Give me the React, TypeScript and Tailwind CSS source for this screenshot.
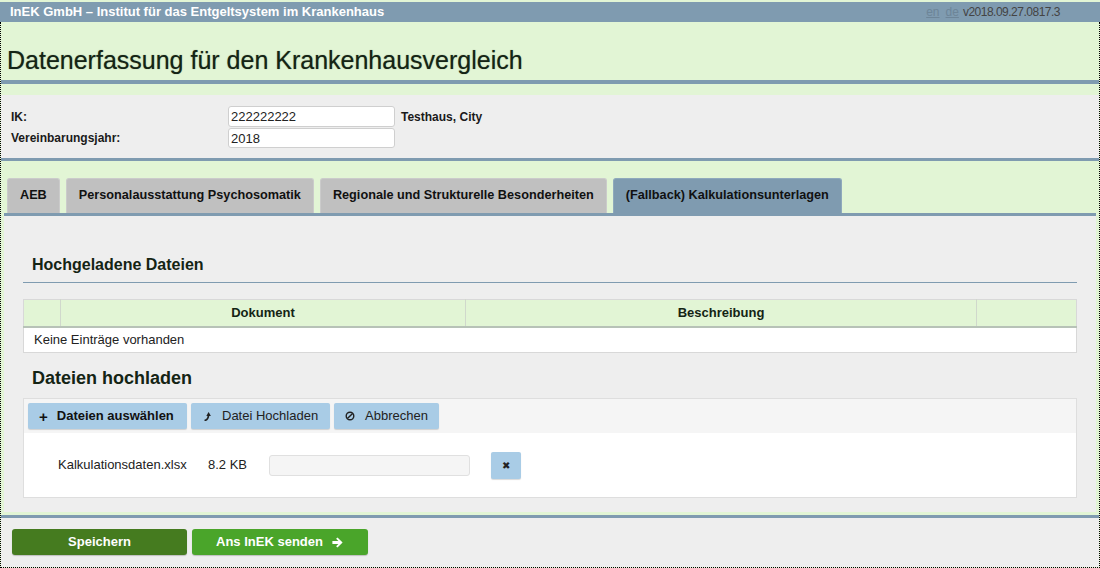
import { useState } from 'react';

const font = { fontFamily: '"Liberation Sans", Arial, sans-serif' };

const tabs = [
  'AEB',
  'Personalausstattung Psychosomatik',
  'Regionale und Strukturelle Besonderheiten',
  '(Fallback) Kalkulationsunterlagen',
];

function UploadIcon() {
  return (
    <svg width="9" height="10" viewBox="0 0 9 10">
      <path d="M1.5 9.5 Q5 9 5.5 4.5" fill="none" stroke="#222" strokeWidth="1.7" />
      <path d="M3.3 5 L5.6 1 L7.9 5 Z" fill="#222" />
    </svg>
  );
}

function BanIcon() {
  return (
    <svg width="10" height="10" viewBox="0 0 10 10">
      <circle cx="5" cy="5" r="3.8" fill="none" stroke="#222" strokeWidth="1.4" />
      <path d="M2.4 7.6 L7.6 2.4" stroke="#222" strokeWidth="1.4" />
    </svg>
  );
}

function ArrowIcon() {
  return (
    <svg width="13" height="13" viewBox="0 0 14 14">
      <path d="M1.5 5.5 H8 L5.5 3 L7 1.5 L12.5 7 L7 12.5 L5.5 11 L8 8.5 H1.5 Z" fill="white" />
    </svg>
  );
}

export default function App() {
  const [active, setActive] = useState(3);

  return (
    <div className="w-[1100px] h-[568px] bg-[#e2f5d5] pt-[2px] overflow-hidden text-[#1a1a1a]" style={font}>
      {/* Kopfzeile */}
      <div className="h-[20px] bg-[#7f9bb0] flex items-center justify-between pl-[10px] pr-[40px]">
        <span className="text-white font-bold text-[13px]">InEK GmbH – Institut für das Entgeltsystem im Krankenhaus</span>
        <span className="text-[11px] text-[#444] flex gap-[6px]">
          <a className="underline text-[#6d8598] text-[12px]">en</a>
          <a className="underline text-[#6d8598] text-[12px]">de</a>
          <span className="-ml-[2px] text-[12px] tracking-[-0.5px]">v2018.09.27.0817.3</span>
        </span>
      </div>

      <div className="h-[546px] border-l border-r border-b border-dotted border-black flex flex-col">
        <div className="h-[58px] pt-[24px] pl-[6px]">
          <h1 className="text-[25px] leading-[28px] text-[#142414] [text-shadow:0_0_1px_rgba(20,40,20,0.5)]">
            Datenerfassung für den Krankenhausvergleich
          </h1>
        </div>
        <div className="h-[4px] bg-[#7f9bb0]" />
        <div className="h-[11px]" />

        {/* Kopfdaten */}
        <div className="h-[63px] bg-[#eeeeee] pt-[11px] pl-[10px] text-[12px] font-bold">
          <div className="flex items-center h-[21px]">
            <span className="w-[217px]">IK:</span>
            <input
              readOnly
              value="222222222"
              className="w-[167px] h-[21px] bg-white border border-[#cfcfcf] rounded-[3px] px-[2px] text-[13px] font-normal text-[#222] outline-none"
            />
            <span className="ml-[6px]">Testhaus, City</span>
          </div>
          <div className="flex items-center h-[20px] mt-[1px]">
            <span className="w-[217px]">Vereinbarungsjahr:</span>
            <input
              readOnly
              value="2018"
              className="w-[167px] h-[20px] bg-white border border-[#cfcfcf] rounded-[3px] px-[2px] text-[13px] font-normal text-[#222] outline-none"
            />
          </div>
        </div>
        <div className="h-[3px] bg-[#7f9bb0]" />

        {/* Reiter */}
        <div className="pt-[17px] pl-[6px] flex gap-[6px]">
          {tabs.map((t, i) => (
            <button
              key={t}
              onClick={() => setActive(i)}
              className={`h-[35px] px-[12px] rounded-t-[3px] border border-b-0 text-[12.7px] font-bold text-[#111] ${
                i === active ? 'bg-[#7f9bb0] border-[#8fa9bc]' : 'bg-[#c0c0c0] border-[#cbcbcb]'
              }`}
            >
              {t}
            </button>
          ))}
        </div>
        <div className="mx-[3px] flex flex-col">
          <div className="h-[3px] bg-[#7f9bb0]" />

          {/* Inhalt */}
          <div className="h-[296px] bg-[#eeeeee] px-[19px]">
            <div className="pt-[39px] pb-[7px] pl-[9px] border-b border-[#7f9bb0]">
              <h2 className="text-[16px] leading-[20px] font-bold text-[#142414]">Hochgeladene Dateien</h2>
            </div>

            <table className="mt-[16px] w-full border border-[#d8d8d8] border-collapse text-[13px]">
              <thead>
                <tr className="h-[27px] bg-[#e2f5d5] border-b-2 border-[#b7c2b7]">
                  <th className="w-[37px] border-r border-[#d0d8cc]" />
                  <th className="w-[405px] border-r border-[#d0d8cc] font-bold text-[#142414]">Dokument</th>
                  <th className="w-[511px] border-r border-[#d0d8cc] font-bold text-[#142414]">Beschreibung</th>
                  <th />
                </tr>
              </thead>
              <tbody>
                <tr className="h-[26px] bg-white">
                  <td colSpan={4} className="pl-[10px] text-[#222]">Keine Einträge vorhanden</td>
                </tr>
              </tbody>
            </table>

            <h2 className="mt-[14px] pl-[9px] text-[18px] leading-[22px] font-bold text-[#142414]">Dateien hochladen</h2>

            <div className="mt-[9px] border border-[#dedede] bg-white">
              <div className="h-[34px] bg-[#f5f5f5] flex items-center gap-[4px] px-[4px] text-[13px]">
                <button className="h-[26px] w-[159px] bg-[#a9cce6] rounded-[2px] shadow-[0_1px_1px_rgba(0,0,0,0.15)] flex items-center gap-[9px] pl-[11px] font-bold text-[#111]">
                  <span className="text-[15px] leading-none font-bold">+</span>
                  Dateien auswählen
                </button>
                <button className="h-[26px] w-[139px] bg-[#a9cce6] rounded-[2px] shadow-[0_1px_1px_rgba(0,0,0,0.15)] flex items-center gap-[10px] pl-[12px] text-[#222]">
                  <UploadIcon />
                  Datei Hochladen
                </button>
                <button className="h-[26px] w-[105px] bg-[#a9cce6] rounded-[2px] shadow-[0_1px_1px_rgba(0,0,0,0.15)] flex items-center gap-[10px] pl-[11px] text-[#222]">
                  <BanIcon />
                  Abbrechen
                </button>
              </div>
              <div className="h-[64px] flex items-center pl-[34px] text-[13px] text-[#222]">
                <span className="w-[150px]">Kalkulationsdaten.xlsx</span>
                <span className="w-[61px]">8.2 KB</span>
                <div className="w-[201px] h-[21px] rounded-[3px] bg-[#f5f5f5] border border-[#e0e0e0]" />
                <button className="ml-[21px] w-[30px] h-[27px] bg-[#a9cce6] rounded-[2px] shadow-[0_1px_1px_rgba(0,0,0,0.15)] text-[10px] text-[#222] flex items-center justify-center">
                  ✖
                </button>
              </div>
            </div>
          </div>
        </div>
        <div className="h-[3px]" />

        {/* Fußzeile */}
        <div className="h-[3px] bg-[#7f9bb0]" />
        <div className="flex-1 bg-[#eeeeee] pt-[11px] pl-[11px] flex gap-[5px] items-start">
          <button className="h-[26px] w-[175px] rounded-[3px] bg-[#457b1f] text-white text-[13px] font-bold shadow-[0_1px_1px_rgba(0,0,0,0.2)]">
            Speichern
          </button>
          <button className="h-[26px] w-[176px] rounded-[3px] bg-[#4aa52a] text-white text-[13px] font-bold shadow-[0_1px_1px_rgba(0,0,0,0.2)] flex items-center justify-center gap-[8px]">
            Ans InEK senden
            <ArrowIcon />
          </button>
        </div>
      </div>
    </div>
  );
}
